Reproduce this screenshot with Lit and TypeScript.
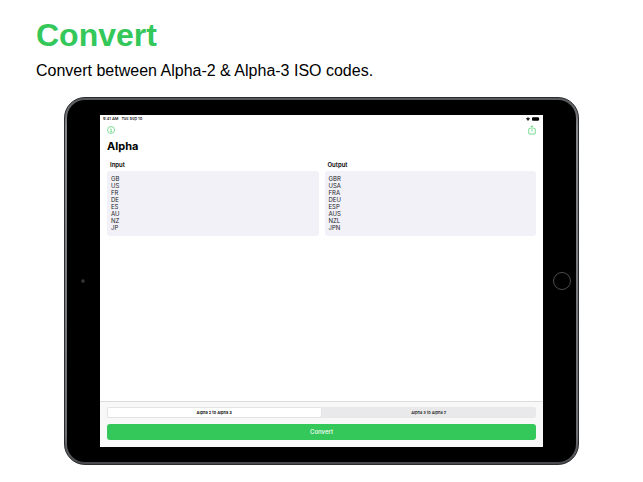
import { LitElement, html, css } from "lit";
import { customElement, property, state } from "lit/decorators.js";

const PAIRS: [string, string][] = [
  ["GB", "GBR"],
  ["US", "USA"],
  ["FR", "FRA"],
  ["DE", "DEU"],
  ["ES", "ESP"],
  ["AU", "AUS"],
  ["NZ", "NZL"],
  ["JP", "JPN"],
];

@customElement("tablet-frame")
class TabletFrame extends LitElement {
  static styles = css`
    :host {
      display: block;
    }
    .shell {
      box-sizing: border-box;
      padding: 2px;
      border-radius: 21px;
      background: linear-gradient(#55575b, #85878b 8%, #6c6e72 92%, #47494d);
      border: 1px solid #2b2c2f;
    }
    .bezel {
      display: grid;
      grid-template-columns: 33px minmax(0, 1fr) 33px;
      align-items: center;
      justify-items: center;
      padding: 15px 0;
      border-radius: 18px;
      background: #000;
    }
    .glass {
      justify-self: stretch;
      aspect-ratio: 4 / 3;
      background: #fff;
      overflow: hidden;
    }
    .camera {
      width: 2px;
      height: 2px;
      margin-right: 2px;
      border: 1px solid #26282b;
      border-radius: 50%;
      background: #3a3c40;
    }
    .home {
      width: 16px;
      height: 16px;
      margin-left: 4px;
      border: 1px solid #4c4c4f;
      border-radius: 50%;
    }
  `;

  render() {
    return html`
      <div class="shell">
        <div class="bezel">
          <span class="camera"></span>
          <div class="glass"><slot></slot></div>
          <span class="home"></span>
        </div>
      </div>
    `;
  }
}

@customElement("code-field")
class CodeField extends LitElement {
  static styles = css`
    :host {
      display: block;
    }
    label {
      display: block;
      padding: 0 3px;
      font-size: 6px;
      line-height: 8px;
      font-weight: 600;
    }
    textarea {
      display: block;
      box-sizing: border-box;
      width: 100%;
      margin: 2px 0 0;
      padding: 4px 4px 5px;
      border: 0;
      border-radius: 3px;
      outline: 0;
      resize: none;
      overflow: hidden;
      background: #f2f1f8;
      color: #1c1c1e;
      font: inherit;
      font-size: 6px;
      line-height: 7px;
    }
  `;

  @property() label = "";
  @property() value = "";

  render() {
    return html`
      <label for="codes">${this.label}</label>
      <textarea id="codes" rows="8" spellcheck="false" .value=${this.value}></textarea>
    `;
  }
}

@customElement("app-root")
class AppRoot extends LitElement {
  static styles = css`
    :host {
      display: block;
      background: #fff;
      color: #000;
      font-family: Inter, "Liberation Sans", sans-serif;
    }
    .intro {
      padding: 14px 36px 0;
      font-family: "Liberation Sans", sans-serif;
    }
    h1,
    h2,
    p {
      margin: 0;
    }
    h1 {
      color: #34c759;
      font-size: 32px;
      line-height: 42px;
      font-weight: 700;
    }
    .lead {
      margin-top: 4px;
      font-size: 16px;
      line-height: 22px;
    }
    tablet-frame {
      margin: 15px 64px 0;
    }
    .app {
      display: flex;
      flex-direction: column;
      height: 100%;
    }
    .status {
      display: flex;
      align-items: center;
      gap: 3px;
      padding: 1px 3px 0;
      font-size: 4px;
      line-height: 6px;
      font-weight: 500;
    }
    .signals {
      display: flex;
      align-items: center;
      gap: 2px;
      margin-left: auto;
    }
    svg {
      display: block;
    }
    .nav {
      display: flex;
      justify-content: space-between;
      padding: 3px 7px 0;
    }
    .nav button {
      padding: 0;
      border: 0;
      background: none;
      color: #34c759;
    }
    h2 {
      padding: 4px 7px 0;
      font-size: 11px;
      line-height: 14px;
      font-weight: 700;
    }
    .fields {
      display: grid;
      grid-template-columns: 1fr 1fr;
      gap: 6px;
      padding: 8px 7px 0;
    }
    .actions {
      display: flex;
      flex-direction: column;
      gap: 6px;
      margin-top: auto;
      padding: 5px 7px 7px;
      border-top: 1px solid #dcdcde;
      background: #f8f8f9;
    }
    .segments {
      display: grid;
      grid-template-columns: 1fr 1fr;
      margin: 0;
      padding: 0;
      border: 0;
      border-radius: 2px;
      background: #e9e9eb;
    }
    .segment {
      box-sizing: border-box;
      border: 1px solid transparent;
      border-radius: 2px;
      font-size: 4px;
      line-height: 9px;
      font-weight: 500;
      text-align: center;
    }
    .segment:has(input:checked) {
      border-color: #e4e4e6;
      background: #fff;
      font-weight: 600;
    }
    .segment input {
      position: absolute;
      opacity: 0;
      pointer-events: none;
    }
    .convert {
      padding: 0;
      border: 0;
      border-radius: 3px;
      background: #34c759;
      color: #fff;
      font: inherit;
      font-size: 6px;
      line-height: 16px;
      font-weight: 500;
    }
  `;

  @state() private reversed = false;
  @state() private shownReversed = false;

  private convert() {
    this.shownReversed = this.reversed;
  }

  render() {
    const short = PAIRS.map((p) => p[0]).join("\n");
    const long = PAIRS.map((p) => p[1]).join("\n");
    return html`
      <header class="intro">
        <h1>Convert</h1>
        <p class="lead">Convert between Alpha-2 &amp; Alpha-3 ISO codes.</p>
      </header>
      <tablet-frame>
        <div class="app">
          <div class="status">
            <span>9:41 AM</span>
            <span>Tue Sep 10</span>
            <span class="signals">
              <svg width="4" height="4" viewBox="0 0 8 8" aria-hidden="true">
                <path d="M0 3Q4-1 8 3L4 8Z" fill="#222" />
              </svg>
              <svg width="8" height="4" viewBox="0 0 16 8" aria-hidden="true">
                <rect width="14" height="7" y="0.500" rx="2" fill="#000" />
                <path d="M15 3v2" stroke="#777" />
              </svg>
            </span>
          </div>
          <nav class="nav">
            <button aria-label="Information">
              <svg width="8" height="10" viewBox="0 0 16 20" fill="none" stroke="currentColor" stroke-width="1.200">
                <circle cx="8" cy="10" r="7" />
                <path d="M6.500 8.500H8.300V13.500M6.300 13.500H10.200" />
                <circle cx="8" cy="6" r="0.700" fill="currentColor" stroke="none" />
              </svg>
            </button>
            <button aria-label="Share">
              <svg width="8" height="10" viewBox="0 0 16 20" fill="none" stroke="currentColor" stroke-width="1.300">
                <path d="M5 7H2.500Q1.500 7 1.500 8V17Q1.500 18 2.500 18H13.500Q14.500 18 14.500 17V8Q14.500 7 13.500 7H11M8 13V1.500M5 4.500L8 1.500L11 4.500" />
              </svg>
            </button>
          </nav>
          <h2>Alpha</h2>
          <div class="fields">
            <code-field label="Input" .value=${this.shownReversed ? long : short}></code-field>
            <code-field label="Output" .value=${this.shownReversed ? short : long}></code-field>
          </div>
          <div class="actions">
            <fieldset class="segments" aria-label="Direction">
              <label class="segment">
                <input type="radio" name="direction" .checked=${!this.reversed} @change=${() => (this.reversed = false)} />
                Alpha 2 to Alpha 3
              </label>
              <label class="segment">
                <input type="radio" name="direction" .checked=${this.reversed} @change=${() => (this.reversed = true)} />
                Alpha 3 to Alpha 2
              </label>
            </fieldset>
            <button class="convert" @click=${this.convert}>Convert</button>
          </div>
        </div>
      </tablet-frame>
    `;
  }
}
